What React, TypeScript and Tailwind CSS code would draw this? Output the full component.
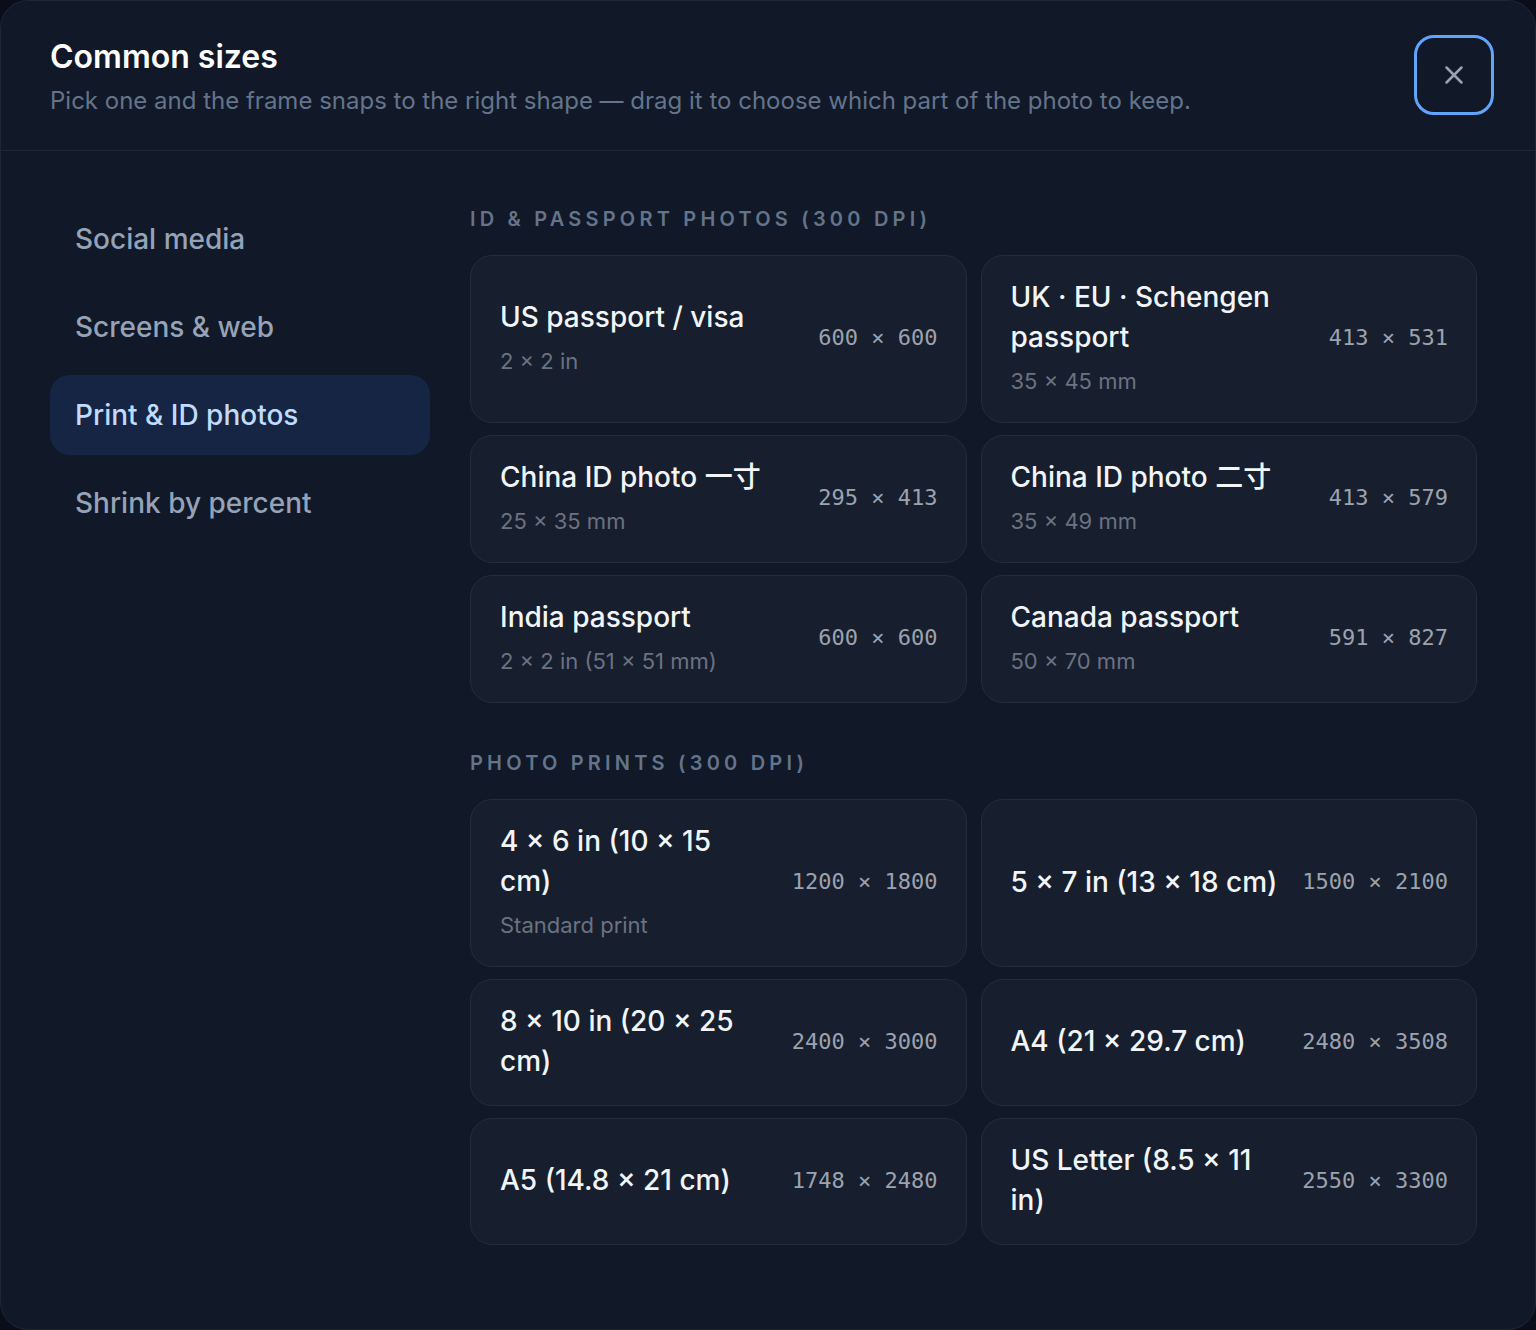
import React from "react";

type Size = { title: string; sub?: string; w: number; h: number };

const idPhotos: Size[] = [
  { title: "US passport / visa", sub: "2 × 2 in", w: 600, h: 600 },
  { title: "UK · EU · Schengen passport", sub: "35 × 45 mm", w: 413, h: 531 },
  { title: "China ID photo 一寸", sub: "25 × 35 mm", w: 295, h: 413 },
  { title: "China ID photo 二寸", sub: "35 × 49 mm", w: 413, h: 579 },
  { title: "India passport", sub: "2 × 2 in (51 × 51 mm)", w: 600, h: 600 },
  { title: "Canada passport", sub: "50 × 70 mm", w: 591, h: 827 },
];

const prints: Size[] = [
  { title: "4 × 6 in (10 × 15 cm)", sub: "Standard print", w: 1200, h: 1800 },
  { title: "5 × 7 in (13 × 18 cm)", w: 1500, h: 2100 },
  { title: "8 × 10 in (20 × 25 cm)", w: 2400, h: 3000 },
  { title: "A4 (21 × 29.7 cm)", w: 2480, h: 3508 },
  { title: "A5 (14.8 × 21 cm)", w: 1748, h: 2480 },
  { title: "US Letter (8.5 × 11 in)", w: 2550, h: 3300 },
];

const tabs = ["Social media", "Screens & web", "Print & ID photos", "Shrink by percent"];

function SizeCard({ s }: { s: Size }) {
  return (
    <button
      type="button"
      className="flex items-center gap-[23px] rounded-[22px] border border-[#242d3d] bg-[#171e2d] pb-[24px] pl-[29px] pr-[28px] pt-[21px] text-left"
    >
      <div className="min-w-0 flex-1">
        <div className="text-[28px] font-medium leading-[40px] text-[#f1f5f9]">{s.title}</div>
        {s.sub && <div className="mt-[8px] text-[22px] leading-[33px] text-[#6b7280]">{s.sub}</div>}
      </div>
      <div
        className="shrink-0 text-[22px] text-[#9ca3af]"
        style={{ fontFamily: "'DejaVu Sans Mono', monospace" }}
      >
        {s.w} × {s.h}
      </div>
    </button>
  );
}

function Section({ label, items, className }: { label: string; items: Size[]; className?: string }) {
  return (
    <section className={className}>
      <h3 className="text-[20px] font-semibold uppercase leading-[24px] tracking-[0.21em] text-[#64748b]">
        {label}
      </h3>
      <div className="mt-[24px] grid grid-cols-2 gap-x-[14px] gap-y-[12px]">
        {items.map((s) => (
          <SizeCard key={s.title} s={s} />
        ))}
      </div>
    </section>
  );
}

export default function App() {
  return (
    <div
      className="h-[1330px] w-full bg-[#0a0e1a]"
      style={{ fontFamily: "Inter, 'Noto Sans CJK SC', sans-serif" }}
    >
      <div className="flex h-full flex-col overflow-hidden rounded-[28px] border border-[#1f2736] bg-[#111827]">
        <header className="flex items-center justify-between border-b border-[#1f2736] pb-[33px] pl-[49px] pr-[41px] pt-[36px]">
          <div>
            <h2 className="text-[32px] font-semibold leading-[40px] text-white">Common sizes</h2>
            <p className="mt-[8px] text-[24px] leading-[32px] text-[#64748b]">
              Pick one and the frame snaps to the right shape — drag it to choose which part of the photo to keep.
            </p>
          </div>
          <button
            type="button"
            aria-label="Close"
            className="-mt-[4px] flex h-[80px] w-[80px] items-center justify-center rounded-[20px] border-[3px] border-[#60a5fa] text-[#9ca3af]"
          >
            <svg width="30" height="30" viewBox="0 0 24 24" fill="none" stroke="currentColor" strokeWidth="2" strokeLinecap="round">
              <path d="M18 6 6 18M6 6l12 12" />
            </svg>
          </button>
        </header>

        <div className="flex gap-[40px] pl-[49px] pr-[58px] pt-[48px]">
          <nav className="flex w-[380px] shrink-0 flex-col gap-[8px]">
            {tabs.map((t) => {
              const active = t === "Print & ID photos";
              return (
                <button
                  key={t}
                  type="button"
                  className={
                    active
                      ? "flex h-[80px] items-center rounded-[20px] bg-[#172544] px-[25px] text-left text-[28px] font-medium text-[#bfdbfe]"
                      : "flex h-[80px] items-center rounded-[20px] px-[25px] text-left text-[28px] font-medium text-[#94a3b8]"
                  }
                >
                  {t}
                </button>
              );
            })}
          </nav>

          <div className="flex-1 pt-[8px]">
            <Section label="ID & Passport photos (300 DPI)" items={idPhotos} />
            <Section label="Photo prints (300 DPI)" items={prints} className="mt-[48px]" />
          </div>
        </div>
      </div>
    </div>
  );
}
